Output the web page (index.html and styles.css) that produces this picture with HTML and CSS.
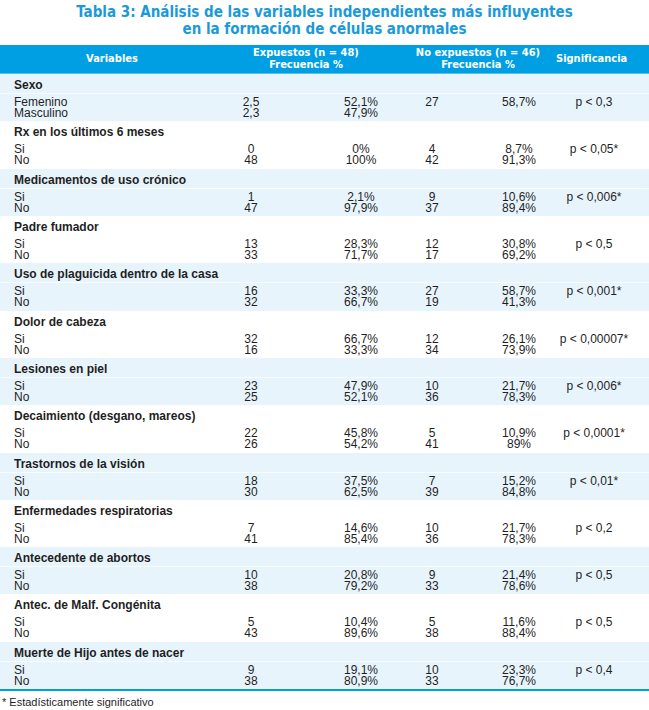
FILE: index.html
```html
<!DOCTYPE html>
<html lang="es">
<head>
<meta charset="utf-8">
<title>Tabla 3</title>
<link rel="stylesheet" href="styles.css">
</head>
<body>
<div class="page">
  <h1 class="title">Tabla 3: Análisis de las variables independientes más influyentes<br>en la formación de células anormales</h1>
  <div class="thead">
    <div class="th">Variables</div>
    <div class="th">Expuestos (n = 48)<br>Frecuencia %</div>
    <div></div>
    <div class="th">No expuestos (n = 46)<br>Frecuencia %</div>
    <div class="th">Significancia</div>
  </div>
  <div class="tbody">
    <div class="group band">
      <div class="gtitle">Sexo</div>
      <div class="rows">
        <div class="v">Femenino<br>Masculino</div><div class="c">2,5<br>2,3</div><div class="c">52,1%<br>47,9%</div><div class="c">27</div><div class="c">58,7%</div><div class="c">p &lt; 0,3</div>
      </div>
    </div>
    <div class="group">
      <div class="gtitle">Rx en los últimos 6 meses</div>
      <div class="rows">
        <div class="v">Si<br>No</div><div class="c">0<br>48</div><div class="c">0%<br>100%</div><div class="c">4<br>42</div><div class="c">8,7%<br>91,3%</div><div class="c">p &lt; 0,05*</div>
      </div>
    </div>
    <div class="group band">
      <div class="gtitle">Medicamentos de uso crónico</div>
      <div class="rows">
        <div class="v">Si<br>No</div><div class="c">1<br>47</div><div class="c">2,1%<br>97,9%</div><div class="c">9<br>37</div><div class="c">10,6%<br>89,4%</div><div class="c">p &lt; 0,006*</div>
      </div>
    </div>
    <div class="group">
      <div class="gtitle">Padre fumador</div>
      <div class="rows">
        <div class="v">Si<br>No</div><div class="c">13<br>33</div><div class="c">28,3%<br>71,7%</div><div class="c">12<br>17</div><div class="c">30,8%<br>69,2%</div><div class="c">p &lt; 0,5</div>
      </div>
    </div>
    <div class="group band">
      <div class="gtitle">Uso de plaguicida dentro de la casa</div>
      <div class="rows">
        <div class="v">Si<br>No</div><div class="c">16<br>32</div><div class="c">33,3%<br>66,7%</div><div class="c">27<br>19</div><div class="c">58,7%<br>41,3%</div><div class="c">p &lt; 0,001*</div>
      </div>
    </div>
    <div class="group">
      <div class="gtitle">Dolor de cabeza</div>
      <div class="rows">
        <div class="v">Si<br>No</div><div class="c">32<br>16</div><div class="c">66,7%<br>33,3%</div><div class="c">12<br>34</div><div class="c">26,1%<br>73,9%</div><div class="c">p &lt; 0,00007*</div>
      </div>
    </div>
    <div class="group band">
      <div class="gtitle">Lesiones en piel</div>
      <div class="rows">
        <div class="v">Si<br>No</div><div class="c">23<br>25</div><div class="c">47,9%<br>52,1%</div><div class="c">10<br>36</div><div class="c">21,7%<br>78,3%</div><div class="c">p &lt; 0,006*</div>
      </div>
    </div>
    <div class="group">
      <div class="gtitle">Decaimiento (desgano, mareos)</div>
      <div class="rows">
        <div class="v">Si<br>No</div><div class="c">22<br>26</div><div class="c">45,8%<br>54,2%</div><div class="c">5<br>41</div><div class="c">10,9%<br>89%</div><div class="c">p &lt; 0,0001*</div>
      </div>
    </div>
    <div class="group band">
      <div class="gtitle">Trastornos de la visión</div>
      <div class="rows">
        <div class="v">Si<br>No</div><div class="c">18<br>30</div><div class="c">37,5%<br>62,5%</div><div class="c">7<br>39</div><div class="c">15,2%<br>84,8%</div><div class="c">p &lt; 0,01*</div>
      </div>
    </div>
    <div class="group">
      <div class="gtitle">Enfermedades respiratorias</div>
      <div class="rows">
        <div class="v">Si<br>No</div><div class="c">7<br>41</div><div class="c">14,6%<br>85,4%</div><div class="c">10<br>36</div><div class="c">21,7%<br>78,3%</div><div class="c">p &lt; 0,2</div>
      </div>
    </div>
    <div class="group band">
      <div class="gtitle">Antecedente de abortos</div>
      <div class="rows">
        <div class="v">Si<br>No</div><div class="c">10<br>38</div><div class="c">20,8%<br>79,2%</div><div class="c">9<br>33</div><div class="c">21,4%<br>78,6%</div><div class="c">p &lt; 0,5</div>
      </div>
    </div>
    <div class="group">
      <div class="gtitle">Antec. de Malf. Congénita</div>
      <div class="rows">
        <div class="v">Si<br>No</div><div class="c">5<br>43</div><div class="c">10,4%<br>89,6%</div><div class="c">5<br>38</div><div class="c">11,6%<br>88,4%</div><div class="c">p &lt; 0,5</div>
      </div>
    </div>
    <div class="group band">
      <div class="gtitle">Muerte de Hijo antes de nacer</div>
      <div class="rows">
        <div class="v">Si<br>No</div><div class="c">9<br>38</div><div class="c">19,1%<br>80,9%</div><div class="c">10<br>33</div><div class="c">23,3%<br>76,7%</div><div class="c">p &lt; 0,4</div>
      </div>
    </div>
  </div>
  <p class="note">* Estadísticamente significativo</p>
</div>
</body>
</html>
```

FILE: styles.css
```css
html, body {
  margin: 0;
  padding: 0;
  background: #ffffff;
}
.page {
  width: 649px;
  font-family: "Liberation Sans", Arial, sans-serif;
  color: #1f1f1f;
}
.title {
  margin: 0;
  height: 45px;
  padding-top: 4px;
  box-sizing: border-box;
  text-align: center;
  font-family: "DejaVu Sans Condensed", "Liberation Sans", sans-serif;
  font-stretch: condensed;
  font-weight: bold;
  font-size: 15px;
  line-height: 17px;
  color: #1a9ad9;
}
.thead {
  display: grid;
  grid-template-columns: 224px 164px 12px 156px 70px 23px;
  align-items: center;
  height: 29px;
  box-sizing: border-box;
  background: #009fe3;
  border-bottom: 1px solid #5cc0ee;
}
.th {
  text-align: center;
  color: #ffffff;
  font-family: "DejaVu Sans Condensed", "Liberation Sans", sans-serif;
  font-stretch: condensed;
  font-weight: bold;
  font-size: 11px;
  line-height: 12px;
  white-space: nowrap;
}
.tbody {
  display: flex;
  flex-direction: column;
  height: 615px;
  border-bottom: 2px solid #009fe3;
}
.group {
  flex: 1;
  padding-top: 3px;
  box-sizing: border-box;
}
.group.band {
  background: #e8f4fc;
}
.gtitle {
  padding-left: 14px;
  font-weight: bold;
  font-size: 12px;
  line-height: 16px;
  height: 17px;
  box-sizing: border-box;
  border-bottom: 1px solid rgba(255, 255, 255, 0.7);
}
.rows {
  display: grid;
  grid-template-columns: 163px 176px 44px 98px 76px 74px 18px;
  padding-top: 3px;
  font-size: 12px;
  line-height: 11px;
}
.v {
  padding-left: 14px;
}
.c {
  text-align: center;
  white-space: nowrap;
}
.note {
  margin: 0;
  padding: 5px 0 0 2px;
  font-size: 11px;
  line-height: 12px;
}
```
